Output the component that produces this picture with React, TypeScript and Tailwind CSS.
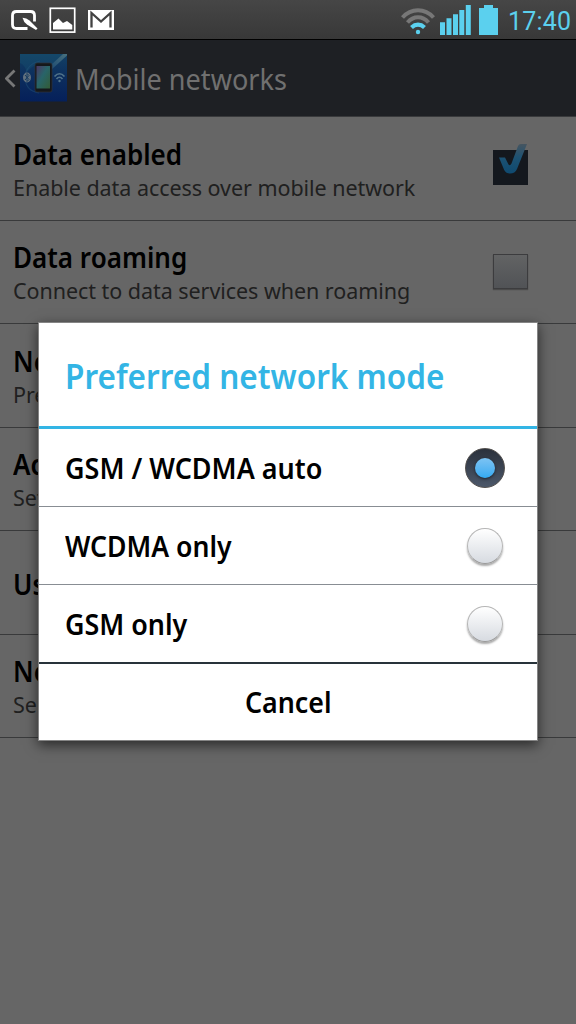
import React, { useState } from 'react';
import { clsx } from 'clsx';

interface Setting {
  title: string;
  summary?: string;
  checked?: boolean;
}

const settings: Setting[] = [
  { title: 'Data enabled', summary: 'Enable data access over mobile network', checked: true },
  { title: 'Data roaming', summary: 'Connect to data services when roaming', checked: false },
  { title: 'Network mode', summary: 'Preferred network mode' },
  { title: 'Access Point Names', summary: 'Set access point names' },
  { title: 'Use only 2G networks' },
  { title: 'Network operators', summary: 'Select a network operator' },
];

const modes = [
  { label: 'GSM / WCDMA auto', className: 'scale-x-[0.963]' },
  { label: 'WCDMA only', className: 'scale-x-[0.95]' },
  { label: 'GSM only', className: 'scale-x-[0.96]' },
];

function StatusBar() {
  return (
    <div className="flex h-10 items-center justify-between border-b border-black bg-linear-to-b from-[#464646] to-[#383838]">
      <svg width="130" height="39" viewBox="0 0 130 39" fill="none">
        <path d="M27.5 28.5H16.5Q12.5 28.5 12.5 24.5V15.5Q12.5 11.5 16.5 11.5H30.5Q34.5 11.5 34.5 15.5V21.5" stroke="#fff" strokeWidth="2.8" />
        <path d="M22.5 17.8Q26.5 17.8 29.5 20.5L37.5 28.5L36 30L27 24.5Q23.5 22 22.5 17.8Z" fill="#fff" />
        <rect x="50.3" y="8.3" width="24.4" height="23.8" stroke="#fff" strokeWidth="1.7" />
        <path d="M53 29.5V23L58.5 18.500L63 23L67 21L72.3 25V29.5Z" fill="#fff" />
        <path d="M88 10H114V30H88Z" fill="#fff" />
        <path d="M91.5 27.5V13L101 21.5L110.5 13V27.5" stroke="#424242" strokeWidth="2.3" />
      </svg>
      <div className="flex items-center">
        <svg width="108" height="39" viewBox="0 0 108 39" fill="none">
          <path d="M2.5 17.5Q9 10.3 18 10.3T33.5 17.5" stroke="#777" strokeWidth="4" />
          <path d="M7.5 22.5Q12 17.3 18 17.3T28.5 22.5" stroke="#777" strokeWidth="4" />
          <path d="M11.5 27.5Q14.5 24.7 18 24.7T24.5 27.5" stroke="#5bd0ee" strokeWidth="4.2" />
          <circle cx="18" cy="32" r="2.2" fill="#5bd0ee" />
          <path d="M40 22.3h5V35h-5zM46.5 18.3h5V35h-5zM53 14.3h5V35h-5zM59.3 10h5V35h-5zM65.8 5h5V35h-5z" fill="#5bd0ee" />
          <path d="M79 8h5V5h9v3h5v27H79z" fill="#5bd0ee" />
        </svg>
        <span className="w-[68px] pt-1 font-['Roboto',sans-serif] text-[25px] leading-9 tracking-[0.2px] text-[#5bd0ee] whitespace-nowrap">17:40</span>
      </div>
    </div>
  );
}

function SettingsIcon() {
  return (
    <svg width="47" height="48" viewBox="0 0 47 48" className="ml-1">
      <defs>
        <linearGradient id="tile" x1="0" y1="0" x2="0" y2="1">
          <stop offset="0" stopColor="#124064" />
          <stop offset=".5" stopColor="#0c2d5d" />
          <stop offset="1" stopColor="#05205a" />
        </linearGradient>
        <linearGradient id="glare" x1="1" y1="0" x2="0" y2="1">
          <stop offset="0" stopColor="#48707d" />
          <stop offset="1" stopColor="#1c4b73" />
        </linearGradient>
        <linearGradient id="screen" x1="0" y1="0" x2="1" y2="1">
          <stop offset="0" stopColor="#4b3764" />
          <stop offset=".45" stopColor="#286469" />
          <stop offset="1" stopColor="#335c36" />
        </linearGradient>
      </defs>
      <rect width="47" height="47.5" fill="url(#tile)" />
      <path d="M0 0H47L31 15Q17 5 7 18Q4 10 0 9Z" fill="#1a5672" opacity=".35" />
      <path d="M31 11L43 0H47V1.5L31 16Z" fill="url(#glare)" />
      <path d="M20 7Q6 10 5 24Q6 37 19 39" fill="none" stroke="#24567c" strokeWidth="1.2" opacity=".45" />
      <ellipse cx="7" cy="23.5" rx="4" ry="5" fill="#62717e" />
      <path d="M5 21L9 25.5L7 27.5V19.5L9 21.5L5 26" stroke="#173c60" fill="none" />
      <rect x="15" y="9" width="17" height="29" rx="2" fill="#15181b" stroke="#303237" strokeWidth=".7" />
      <rect x="16.5" y="12" width="13.5" height="22.5" fill="url(#screen)" />
      <path d="M34.5 22.5Q39.5 17 44.5 22.5M36.5 25Q39.5 21.5 42.5 25" stroke="#50728a" strokeWidth="1.7" fill="none" />
      <circle cx="39.5" cy="27" r="1.2" fill="#50728a" />
    </svg>
  );
}

function Checkbox({ checked }: { checked: boolean }) {
  if (!checked) {
    return <div className="mr-12 h-[35px] w-[35px] border border-[#3c3c3e] bg-linear-to-b from-[#626364] to-[#515356] shadow-[0_1px_1px_#4a4a4a]" />;
  }
  return (
    <svg width="38" height="44" viewBox="0 0 38 44" className="mr-[45px] mb-2">
      <defs>
        <linearGradient id="tick" x1="0" y1="0" x2="0" y2="1">
          <stop offset="0" stopColor="#465560" />
          <stop offset=".45" stopColor="#1d5273" />
          <stop offset="1" stopColor="#0f4a70" />
        </linearGradient>
      </defs>
      <rect y="8" width="35" height="35" fill="#14181e" />
      <path d="M6 15.5H12L15.5 22.5Q17 24.5 18.5 21.5L25 4Q25.7 2 28 2H34L24 27Q22 31.5 17 31.5Q13 31.5 11.2 28Z" fill="url(#tick)" />
    </svg>
  );
}

function Radio({ selected }: { selected: boolean }) {
  return selected ? (
    <div className="flex h-10 w-10 items-center justify-center rounded-full border border-[#514e4c] bg-linear-to-b from-[#2b313c] to-[#4c586a]">
      <div className="h-5 w-5 rounded-full bg-linear-to-b from-[#7cc3f3] to-[#31aaf1] shadow-[0_1px_3px_#1b2029]" />
    </div>
  ) : (
    <div className="mr-0.5 h-9 w-9 rounded-full border border-[#b5b5b5] border-b-[#999] bg-linear-to-b from-white to-[#d7dbe1] shadow-[0_2px_2px_#aaa]" />
  );
}

export default function App() {
  const [selected, setSelected] = useState(0);

  return (
    <div className="relative h-[1024px] w-[576px] overflow-hidden bg-[#666] font-['Noto_Sans',sans-serif]">
      <StatusBar />
      <header className="flex h-[77px] items-center border-b border-[#393a3c] bg-[#1e2024]">
        <svg width="11" height="20" viewBox="0 0 11 20" className="ml-[5px]">
          <path d="M9.5 2.5L1.5 10.5L9.5 18.5" fill="none" stroke="#777" strokeWidth="2.8" />
        </svg>
        <SettingsIcon />
        <h1 className="ml-2 origin-left scale-x-[0.95] pt-0.5 text-[28.5px] leading-none text-[#707070] whitespace-nowrap">Mobile networks</h1>
      </header>

      <ul>
        {settings.map((item) => (
          <li key={item.title} className="flex h-[103.5px] items-center justify-between border-b border-[#393a3b] pl-[13px]">
            <div className="pt-[3px] whitespace-nowrap">
              <p className="origin-left scale-x-[0.93] text-[28px] leading-9 font-semibold text-black">{item.title}</p>
              {item.summary && (
                <p className="text-[21.5px] leading-8 tracking-[-0.05px] text-[#202020]">{item.summary}</p>
              )}
            </div>
            {item.checked !== undefined && <Checkbox checked={item.checked} />}
          </li>
        ))}
      </ul>

      <div role="dialog" className="absolute top-[322px] left-[38px] h-[419px] w-[500px] border border-[#858585] bg-white shadow-[0_4px_12px_rgba(0,0,0,0.6)]">
        <h2 className="flex h-[106px] items-center border-b-3 border-[#33b5e5] pt-[3px] pl-[26px] text-[34.5px] font-semibold text-[#33b5e5] whitespace-nowrap">
          <span className="origin-left scale-x-[0.914]">Preferred network mode</span>
        </h2>
        {modes.map((mode, i) => (
          <button
            key={mode.label}
            onClick={() => setSelected(i)}
            className={clsx(
              'flex w-full items-center justify-between pr-8 pl-[26px] text-[28px] font-semibold text-black whitespace-nowrap',
              i === modes.length - 1 ? 'h-[77px]' : 'h-[78px] border-b border-[#888d93]'
            )}
          >
            <span className={clsx('origin-left pt-px', mode.className)}>{mode.label}</span>
            <Radio selected={selected === i} />
          </button>
        ))}
        <button className="flex h-[78px] w-full items-center justify-center border-t-2 border-[#28333a] text-[28px] font-semibold text-black">
          <span className="scale-x-[0.957]">Cancel</span>
        </button>
      </div>
    </div>
  );
}
